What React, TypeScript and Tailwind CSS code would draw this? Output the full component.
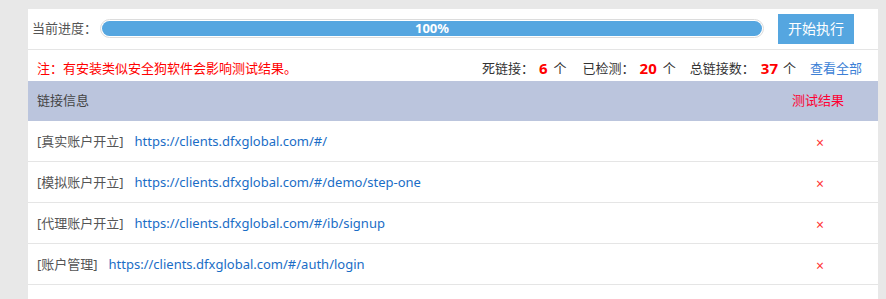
import React from "react";

const rows = [
  { label: "[真实账户开立]", url: "https://clients.dfxglobal.com/#/" },
  { label: "[模拟账户开立]", url: "https://clients.dfxglobal.com/#/demo/step-one" },
  { label: "[代理账户开立]", url: "https://clients.dfxglobal.com/#/ib/signup" },
  { label: "[账户管理]", url: "https://clients.dfxglobal.com/#/auth/login" },
];

export default function App() {
  return (
    <div
      className="w-[886px] h-[299px] bg-[#e8e8e8] pt-[9px] pl-[28px] overflow-hidden"
      style={{ fontFamily: '"Noto Sans", "Noto Sans CJK SC", sans-serif' }}
    >
      <div className="w-[850px] h-[290px] bg-white">
        <div className="h-[41px] flex items-center pl-[4px] pr-[24px] border-b border-[#e5e5e5]">
          <span className="text-[13px] text-[#555] whitespace-nowrap shrink-0 mr-[3px] mt-[-1px]">当前进度：</span>
          <div className="flex-1 h-[19px] rounded-full border border-[#dcdcdc] p-[1px] mt-[-2px]">
            <div className="h-full w-full rounded-full bg-[#55a6e0] flex items-center justify-center text-white text-[13px] font-bold leading-none">
              100%
            </div>
          </div>
          <button className="ml-[14px] w-[76px] h-[30px] mt-[-1px] bg-[#55a6e0] text-white text-[14px] shrink-0">
            开始执行
          </button>
        </div>
        <div className="h-[31px] flex items-end pb-[3px] pl-[9px] pr-[16px] text-[13px] whitespace-nowrap">
          <span className="text-[#ff0000]">注：有安装类似安全狗软件会影响测试结果。</span>
          <div className="ml-auto flex items-end text-[#333]">
            <span>死链接：</span>
            <span className="text-[#ff0000] font-bold text-[15px] leading-[19px] ml-[5px] mr-[6px]">6</span>
            <span>个</span>
            <span className="ml-[16px]">已检测：</span>
            <span className="text-[#ff0000] font-bold text-[15px] leading-[19px] ml-[5px] mr-[6px]">20</span>
            <span>个</span>
            <span className="ml-[14px]">总链接数：</span>
            <span className="text-[#ff0000] font-bold text-[15px] leading-[19px] ml-[6px] mr-[5px]">37</span>
            <span>个</span>
            <a className="ml-[14px] text-[#3c7fd6]">查看全部</a>
          </div>
        </div>
        <div className="h-[40px] bg-[#bbc5dd] flex items-center pl-[9px] text-[13px]">
          <span className="text-[#444]">链接信息</span>
          <span className="ml-auto w-[86px] text-[#ff0033]">测试结果</span>
        </div>
        {rows.map((r) => (
          <div key={r.url} className="h-[41px] flex items-center pl-[9px] border-b border-[#e5e5e5] text-[13px] whitespace-nowrap">
            <span className="text-[#555] mt-[2px]">{r.label}</span>
            <a className="ml-[11px] mt-[2px] text-[#1a6dc6]">{r.url}</a>
            <span className="ml-auto w-[62px] text-[#ff3333] text-[14px] mt-[2px]">×</span>
          </div>
        ))}
      </div>
    </div>
  );
}
